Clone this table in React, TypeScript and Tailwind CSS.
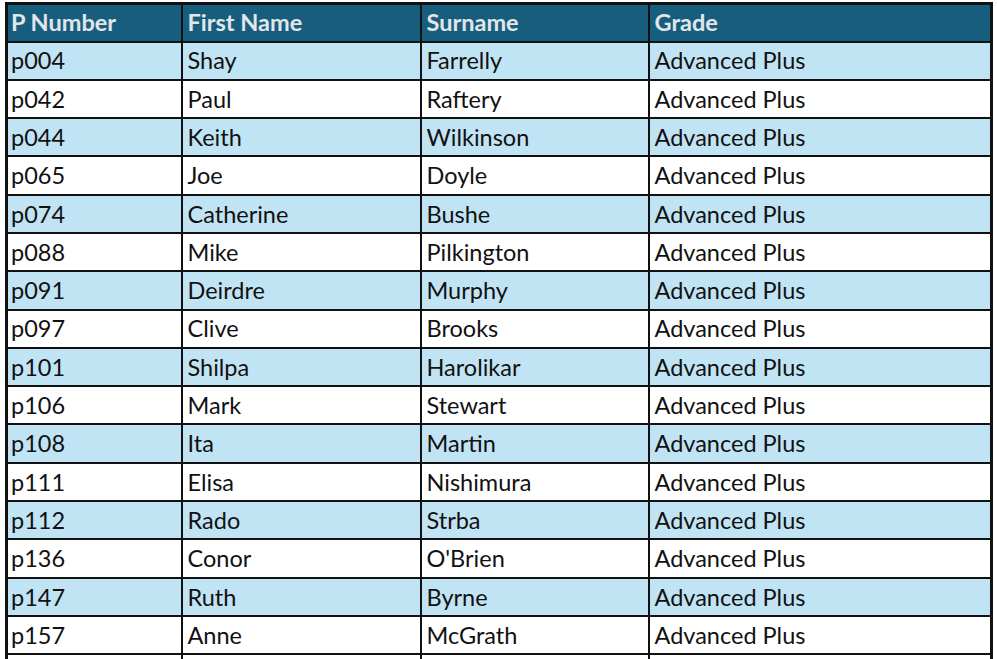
const rows: [string, string, string, string][] = [
  ['p004', 'Shay', 'Farrelly', 'Advanced Plus'],
  ['p042', 'Paul', 'Raftery', 'Advanced Plus'],
  ['p044', 'Keith', 'Wilkinson', 'Advanced Plus'],
  ['p065', 'Joe', 'Doyle', 'Advanced Plus'],
  ['p074', 'Catherine', 'Bushe', 'Advanced Plus'],
  ['p088', 'Mike', 'Pilkington', 'Advanced Plus'],
  ['p091', 'Deirdre', 'Murphy', 'Advanced Plus'],
  ['p097', 'Clive', 'Brooks', 'Advanced Plus'],
  ['p101', 'Shilpa', 'Harolikar', 'Advanced Plus'],
  ['p106', 'Mark', 'Stewart', 'Advanced Plus'],
  ['p108', 'Ita', 'Martin', 'Advanced Plus'],
  ['p111', 'Elisa', 'Nishimura', 'Advanced Plus'],
  ['p112', 'Rado', 'Strba', 'Advanced Plus'],
  ['p136', 'Conor', "O'Brien", 'Advanced Plus'],
  ['p147', 'Ruth', 'Byrne', 'Advanced Plus'],
  ['p157', 'Anne', 'McGrath', 'Advanced Plus'],
]

export default function App() {
  return (
    <div className="h-[659px] overflow-hidden bg-white pl-[5px] pt-[2px]" style={{ fontFamily: 'Lato, "Open Sans", sans-serif' }}>
      <table className="w-[988px] table-fixed border-collapse border-[3px] border-[#111] text-[23.5px] leading-none">
        <colgroup>
          <col className="w-[175px]" />
          <col className="w-[239px]" />
          <col className="w-[228px]" />
          <col />
        </colgroup>
        <thead>
          <tr className="h-[38px] bg-[#175e7e] text-left font-bold text-[#e3e6e8]">
            <th className="border-2 border-[#111] px-[3px]">P Number</th>
            <th className="border-2 border-[#111] px-[5px]">First Name</th>
            <th className="border-2 border-[#111] px-[5px]">Surname</th>
            <th className="border-2 border-[#111] px-[5px]">Grade</th>
          </tr>
        </thead>
        <tbody className="text-[#111]">
          {rows.map((r, i) => (
            <tr key={r[0]} className={i % 2 === 0 ? 'h-[38.3px] bg-[#c1e4f4]' : 'h-[38.3px] bg-white'}>
              <td className="border-x-2 border-b-2 border-[#111] px-[3px] pt-[1px]">{r[0]}</td>
              <td className="border-x-2 border-b-2 border-[#111] px-[5px] pt-[1px]">{r[1]}</td>
              <td className="border-x-2 border-b-2 border-[#111] px-[5px] pt-[1px]">{r[2]}</td>
              <td className="border-x-2 border-b-2 border-[#111] px-[5px] pt-[1px]">{r[3]}</td>
            </tr>
          ))}
          <tr className="h-[38.3px] bg-white">
            <td className="border-x-2 border-[#111]"></td>
            <td className="border-x-2 border-[#111]"></td>
            <td className="border-x-2 border-[#111]"></td>
            <td className="border-x-2 border-[#111]"></td>
          </tr>
        </tbody>
      </table>
    </div>
  )
}
